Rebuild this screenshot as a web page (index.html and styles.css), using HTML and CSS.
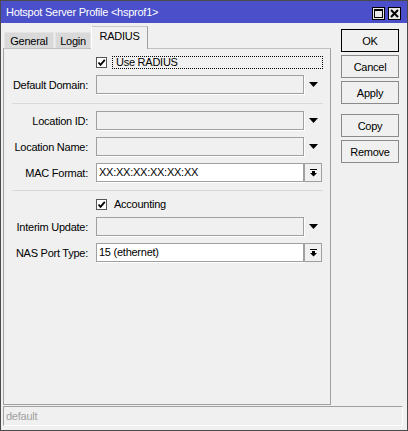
FILE: index.html
```html
<!DOCTYPE html>
<html>
<head>
<meta charset="utf-8">
<link rel="stylesheet" href="styles.css">
</head>
<body>
<div class="window">
  <div class="titlebar">
    <span class="title">Hotspot Server Profile &lt;hsprof1&gt;</span>
    <div class="tbtns">
      <span class="tbtn"><svg width="9" height="9" viewBox="0 0 9 9"><rect x="0.5" y="0.5" width="8" height="8" fill="none" stroke="#000"/><rect x="0" y="0" width="9" height="2" fill="#000"/></svg></span>
      <span class="tbtn"><svg width="9" height="9" viewBox="0 0 9 9"><path d="M1 1 L8 8 M8 1 L1 8" stroke="#000" stroke-width="2"/></svg></span>
    </div>
  </div>
  <div class="main">
    <div class="left">
      <div class="tabs">
        <div class="tab tab-general">General</div>
        <div class="tab tab-login">Login</div>
        <div class="tab tab-radius active">RADIUS</div>
      </div>
      <div class="panel">
        <div class="row check-row first">
          <span class="spacer"></span>
          <span class="checkbox"><svg width="9" height="9" viewBox="0 0 9 9"><path d="M1.5 4.5 L3.5 6.8 L7.8 1.8" fill="none" stroke="#000" stroke-width="1.8"/></svg></span>
          <span class="check-label focus">Use RADIUS</span>
        </div>
        <div class="row r-gap3">
          <span class="label">Default Domain:</span>
          <span class="input disabled"></span>
          <span class="arrow"><svg width="9" height="5" viewBox="0 0 9 5"><path d="M0 0 H9 L4.5 5 Z" fill="#000"/></svg></span>
        </div>
        <div class="sep sep1"></div>
        <div class="row r-gap7">
          <span class="label">Location ID:</span>
          <span class="input disabled"></span>
          <span class="arrow"><svg width="9" height="5" viewBox="0 0 9 5"><path d="M0 0 H9 L4.5 5 Z" fill="#000"/></svg></span>
        </div>
        <div class="row r-gap7">
          <span class="label">Location Name:</span>
          <span class="input disabled"></span>
          <span class="arrow"><svg width="9" height="5" viewBox="0 0 9 5"><path d="M0 0 H9 L4.5 5 Z" fill="#000"/></svg></span>
        </div>
        <div class="row r-gap7">
          <span class="label">MAC Format:</span>
          <span class="input">XX:XX:XX:XX:XX:XX</span>
          <span class="dbtn"><svg width="7" height="8" viewBox="0 0 7 8"><rect x="0" y="0" width="7" height="1" fill="#000"/><rect x="2" y="2" width="3" height="2" fill="#000"/><path d="M0 4 H7 L3.5 7.5 Z" fill="#000"/></svg></span>
        </div>
        <div class="sep sep2"></div>
        <div class="row check-row r-gap4">
          <span class="spacer"></span>
          <span class="checkbox"><svg width="9" height="9" viewBox="0 0 9 9"><path d="M1.5 4.5 L3.5 6.8 L7.8 1.8" fill="none" stroke="#000" stroke-width="1.8"/></svg></span>
          <span class="check-label">Accounting</span>
        </div>
        <div class="row r-gap3">
          <span class="label">Interim Update:</span>
          <span class="input disabled"></span>
          <span class="arrow"><svg width="9" height="5" viewBox="0 0 9 5"><path d="M0 0 H9 L4.5 5 Z" fill="#000"/></svg></span>
        </div>
        <div class="row r-gap7">
          <span class="label">NAS Port Type:</span>
          <span class="input">15 (ethernet)</span>
          <span class="dbtn"><svg width="7" height="8" viewBox="0 0 7 8"><rect x="0" y="0" width="7" height="1" fill="#000"/><rect x="2" y="2" width="3" height="2" fill="#000"/><path d="M0 4 H7 L3.5 7.5 Z" fill="#000"/></svg></span>
        </div>
      </div>
    </div>
    <div class="buttons">
      <div class="btn default">OK</div>
      <div class="btn">Cancel</div>
      <div class="btn">Apply</div>
      <div class="btn group">Copy</div>
      <div class="btn">Remove</div>
    </div>
  </div>
  <div class="status">default</div>
</div>
</body>
</html>
```
FILE: styles.css
```css
html, body {
  margin: 0;
  padding: 0;
  background: #f0f0f0;
}
body {
  font-family: "Liberation Sans", Arial, sans-serif;
  font-size: 11px;
  letter-spacing: -0.25px;
  color: #000;
}
.window {
  width: 408px;
  height: 431px;
  box-sizing: border-box;
  border: 1px solid #4a4a4a;
  background: #f0f0f0;
  display: flex;
  flex-direction: column;
  padding-bottom: 4px;
}
.titlebar {
  height: 22px;
  background: #4b4fc9;
  display: flex;
  align-items: flex-start;
  justify-content: space-between;
  padding: 0 6px 0 5px;
  flex: none;
}
.title {
  color: #fff;
  line-height: 22px;
}
.tbtns {
  display: flex;
  gap: 3px;
  padding-top: 6px;
}
.tbtn {
  width: 13px;
  height: 13px;
  box-sizing: border-box;
  border: 1px solid #000;
  background: #e8e8e8;
  display: flex;
  align-items: center;
  justify-content: center;
}
.tbtn svg { display: block; }
.main {
  display: flex;
  padding-left: 2px;
  flex: none;
}
.left {
  width: 328px;
  display: flex;
  flex-direction: column;
}
.tabs {
  height: 25px;
  display: flex;
  align-items: flex-end;
  padding-left: 1px;
  position: relative;
  z-index: 1;
}
.tab {
  height: 16px;
  box-sizing: border-box;
  background: #d9d9d9;
  border: 1px solid #e4e4e4;
  border-bottom: none;
  display: flex;
  align-items: center;
  justify-content: center;
  padding-top: 1px;
}
.tab-general { width: 50px; }
.tab-login { width: 36px; margin-left: 1px; }
.tab-radius { width: 57px; }
.tab.active {
  height: 23px;
  margin-bottom: -1px;
  background: #f0f0f0;
  border-top: 1px solid #c8c8c8;
  border-left: 1px solid #ffffff;
  border-right: 1px solid #a0a0a0;
  padding-top: 0;
  padding-bottom: 4px;
}
.panel {
  height: 357px;
  box-sizing: border-box;
  border: 1px solid #a0a0a0;
  border-top-color: #c0c0c0;
  padding-top: 4px;
  display: flex;
  flex-direction: column;
}
.row {
  display: flex;
  align-items: center;
  height: 19px;
  flex: none;
}
.r-gap3 { margin-top: 3px; }
.r-gap4 { margin-top: 4px; }
.r-gap7 { margin-top: 7px; }
.label {
  width: 84px;
  text-align: right;
  margin-right: 8px;
  white-space: nowrap;
}
.spacer {
  width: 92px;
  flex: none;
}
.input {
  width: 208px;
  height: 19px;
  box-sizing: border-box;
  border: 1px solid #a0a0a0;
  box-shadow: 1px 1px 0 #ffffff;
  background: #fff;
  padding-left: 2px;
  line-height: 17px;
  white-space: nowrap;
  overflow: hidden;
}
.input.disabled {
  background: #f0f0f0;
}
.arrow {
  width: 18px;
  height: 19px;
  display: flex;
  align-items: center;
  justify-content: center;
}
.arrow svg, .dbtn svg, .checkbox svg { display: block; }
.dbtn {
  width: 18px;
  height: 19px;
  box-sizing: border-box;
  border: 1px solid #a0a0a0;
  background: #f0f0f0;
  display: flex;
  align-items: center;
  justify-content: center;
}
.checkbox {
  width: 11px;
  height: 11px;
  box-sizing: border-box;
  border: 1px solid #555;
  background: #fff;
  display: flex;
  align-items: center;
  justify-content: center;
  flex: none;
}
.check-label {
  margin-left: 7px;
  line-height: 11px;
}
.check-label.focus {
  margin-left: 5px;
  width: 211px;
  box-sizing: border-box;
  border: 1px dotted #000;
  padding-left: 3px;
}
.sep {
  margin-left: 8px;
  width: 311px;
  height: 1px;
  background: #d9d9d9;
  flex: none;
}
.sep1 { margin-top: 9px; }
.sep2 { margin-top: 8px; }
.buttons {
  margin-left: 10px;
  padding-top: 6px;
  display: flex;
  flex-direction: column;
  gap: 3px;
  width: 58px;
}
.btn {
  height: 23px;
  box-sizing: border-box;
  border: 1px solid #8a8a8a;
  background: #f0f0f0;
  display: flex;
  align-items: center;
  justify-content: center;
}
.btn.default {
  border-color: #000;
}
.btn.group {
  margin-top: 7px;
}
.status {
  margin: 1px 0 0 2px;
  width: 400px;
  height: 20px;
  box-sizing: border-box;
  border-top: 1px solid #a0a0a0;
  border-left: 1px solid #a0a0a0;
  border-bottom: 1px solid #ffffff;
  border-right: 1px solid #ffffff;
  color: #a0a0a0;
  padding-left: 2px;
  line-height: 18px;
  flex: none;
}
```
